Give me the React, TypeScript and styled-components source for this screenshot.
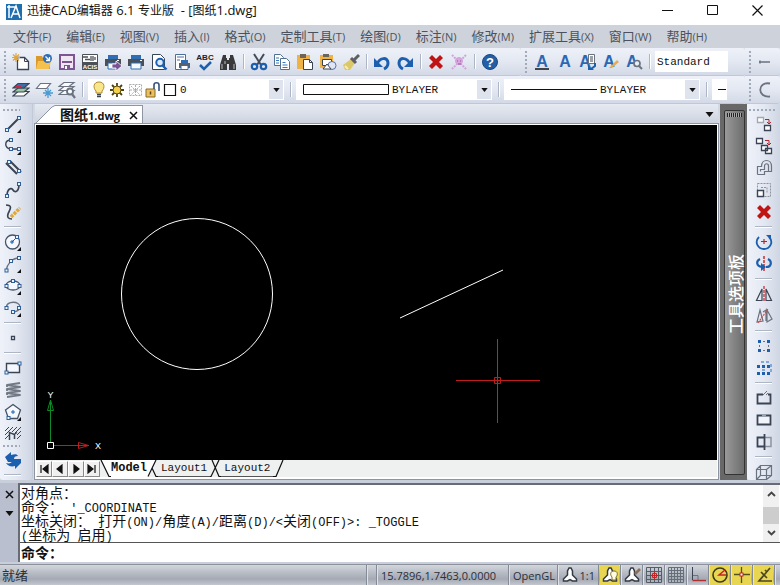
import React, { ReactNode } from "react";
import styled, { createGlobalStyle, css } from "styled-components";

const ui = `"Open Sans", "Noto Sans CJK SC", sans-serif`;
const mono = `"Liberation Mono", "Noto Sans CJK SC", monospace`;

const GlobalStyle = createGlobalStyle`
  * { box-sizing: border-box; }
  body { margin: 0; font-family: ${ui}; font-size: 12px; color: #111; overflow: hidden; }
  button, input, select { font: inherit; color: inherit; margin: 0; padding: 0; border: 0; background: none; border-radius: 0; }
  svg { display: block; flex: none; }
`;

/* ---------- icon drawings, all on an 18 x 18 grid ---------- */

const D = "#3b4454";
const B = "#1c5fae";
const G = "#6b7280";

const Node = ({ x, y }: { x: number; y: number }) => (
  <rect x={x - 1.5} y={y - 1.5} width="3" height="3" fill="#eef4fc" stroke="#2f5f96" />
);
const More = () => <path d="M17 14v4h-4z" fill="#111" />;
const Letter = ({ x = 9 }: { x?: number }) => (
  <text x={x} y="14" textAnchor="middle" fontFamily="Liberation Sans" fontWeight="700" fontSize="16" fill="#2a68b4">A</text>
);
const Printer = () => (
  <g>
    <path d="M4 2h10v5H4z" fill="#2f6db5" />
    <path d="M1 6h16v7H1z" fill="#4a5058" />
    <path d="M4 10h10v6H4z" fill="#f5f8fc" stroke="#2f6db5" />
    <path d="M13 7.500h2" stroke="#fff" />
  </g>
);
const Compass = () => (
  <path d="M8 2h2l1.500 3v4l4 4v2h-4L9 13.500 6.500 15h-4v-2l4-4V5z" fill="#fff" stroke="#333a44" strokeWidth="1.500" />
);

const drawings: Record<string, ReactNode> = {
  new: (
    <g>
      <path d="M5.500 4.500h7l4 4v8h-11z" fill="#fff" stroke={D} strokeWidth="1.300" />
      <path d="M12.500 4.500v4h4" fill="none" stroke={D} />
      <path d="M4 0v9M0 4.500h8M1 1.500l6 6M7 1.500l-6 6" stroke="#e0a63a" strokeWidth="1.200" />
    </g>
  ),
  open: (
    <g>
      <path d="M1 3h6l1 2h7v11H1z" fill="#d99a2b" />
      <path d="M3 8h13l-2 8H1z" fill="#f4c04e" />
      <circle cx="12.500" cy="5.500" r="4.500" fill="#2f6db5" />
      <path d="M10.500 3.500l3.500 3.500M14.500 4v3.500H11" fill="none" stroke="#fff" strokeWidth="1.300" />
    </g>
  ),
  save: (
    <g>
      <path d="M2 2h14v14H2z" fill="#efe6f2" stroke="#7d5590" strokeWidth="2" />
      <path d="M4 8h10v2H4z" fill="#7d5590" />
      <path d="M6 12h6v4H6z" fill="#7d5590" />
      <path d="M7 13h2v3H7z" fill="#fff" />
    </g>
  ),
  acis: (
    <g>
      <path d="M1.500 1.500h15v15h-15z" fill="#fff" stroke="#4c5158" />
      <path d="M2 4h5M4 6.500h5M10 3v5M12 3v5M14 4v3" stroke="#4c5158" strokeWidth="1.300" />
      <path d="M1 9h16v8H1z" fill="#4c5158" />
      <text x="9" y="15.500" textAnchor="middle" fontFamily="Liberation Sans" fontWeight="700" fontSize="6" fill="#fff">ACIS</text>
    </g>
  ),
  publish: (
    <g>
      <Printer />
      <path d="M8 11h4V8l6 5-6 5v-3H8z" fill="#7a5296" stroke="#fff" strokeWidth=".8" />
    </g>
  ),
  print: <Printer />,
  preview: (
    <g>
      <path d="M2.500 1.500h8l4 4v11h-12z" fill="#fff" stroke={D} />
      <circle cx="10" cy="9.500" r="3.700" fill="#dcebfb" stroke={B} strokeWidth="2" />
      <path d="M12.500 12.500l4 4" stroke={B} strokeWidth="2.400" />
    </g>
  ),
  pagesetup: (
    <g>
      <path d="M2.500 1.500h10v15h-10z" fill="#fff" stroke="#4c6f9a" />
      <path d="M4 4h7M4 7h3" stroke="#4c6f9a" />
      <path d="M8 7h7v3H8z" fill="#2f6db5" />
      <path d="M6 10h11v5H6z" fill="#59616c" />
      <path d="M8 12.500h7v4H8z" fill="#fff" stroke="#2f6db5" />
    </g>
  ),
  spell: (
    <g>
      <text x="9" y="7" textAnchor="middle" fontFamily="Liberation Sans" fontWeight="700" fontSize="8" fill="#222">ABC</text>
      <path d="M4 12l4 4 7-7" fill="none" stroke={B} strokeWidth="2.500" />
    </g>
  ),
  find: (
    <g fill="#3a3a3a">
      <path d="M4 2h3v3h1v12H1v-5zM14 2h-3v3h-1v12h7v-5z" />
      <path d="M7 7h4v4H7z" />
      <path d="M3 11v5M6 8v3M15 11v5" stroke="#b8bcc4" />
    </g>
  ),
  cut: (
    <g fill="none">
      <path d="M4 1l7 11M14 1L7 12" stroke="#444c58" strokeWidth="2" />
      <circle cx="4.500" cy="13.500" r="2.700" stroke={B} strokeWidth="2.200" />
      <circle cx="13.500" cy="13.500" r="2.700" stroke={B} strokeWidth="2.200" />
    </g>
  ),
  copy: (
    <g fill="#fff" stroke="#53708f">
      <path d="M1.500 1.500h6l3 3v8h-9z" />
      <path d="M7.500 5.500h6l3 3v8h-9z" />
      <path d="M3 5h3M3 7.500h3M3 10h3M9.500 9.500h3M9.500 12h5M9.500 14.500h5" stroke="#3575bd" />
    </g>
  ),
  paste: (
    <g>
      <path d="M1 2h13v14H1z" fill="#eeb246" />
      <path d="M4 1h6v4H4z" fill="#6b6558" />
      <path d="M7.500 6.500h6l3 3v7h-9z" fill="#fff" stroke={D} />
      <path d="M13.500 6.500v3h3" fill="none" stroke={D} />
    </g>
  ),
  pasteblock: (
    <g>
      <path d="M1 2h13v13H1z" fill="#eeb246" />
      <path d="M4 1h6v3H4z" fill="#6b6558" />
      <path d="M3.500 6.500h9v6h-9z" fill="#fff" stroke={D} />
      <circle cx="13" cy="12.500" r="4" fill="#dfe7f6" stroke="#5d6da0" />
      <path d="M4 16l4-5 4 5z" fill="#fff" stroke={D} />
    </g>
  ),
  brush: (
    <g>
      <path d="M9 6l4 4-5 7H3L1 12z" fill="#dcc868" />
      <path d="M9 5l5 5M12 7l5-5" stroke="#5e5f63" strokeWidth="3" />
      <path d="M3 13l3 3" stroke="#f5ecba" strokeWidth="2" />
    </g>
  ),
  undo: (
    <g>
      <path d="M4 11c3-7 11-7 11-1 0 3-2 5-4 6" fill="none" stroke={B} strokeWidth="3" />
      <path d="M1 5v9h9z" fill={B} />
    </g>
  ),
  redo: (
    <g>
      <path d="M14 11C11 4 3 4 3 10c0 3 2 5 4 6" fill="none" stroke={B} strokeWidth="3" />
      <path d="M17 5v9H8z" fill={B} />
    </g>
  ),
  erase: <path d="M2 5l3-3 4 4 4-4 3 3-4 4 4 4-3 3-4-4-4 4-3-3 4-4z" fill="#c01313" />,
  purge: (
    <g fill="none" stroke="#d3a2dc">
      <path d="M2 2l14 14M16 2L2 16" strokeWidth="2" strokeDasharray="2 1" />
      <circle cx="9" cy="8" r="3.500" fill="#d9a5de" />
      <path d="M7 8h1M10 8h1M8 11h3" stroke="#8b5a98" />
    </g>
  ),
  help: (
    <g>
      <circle cx="9" cy="9" r="7.500" fill="#245fa5" stroke="#194a86" />
      <text x="9" y="13.500" textAnchor="middle" fontFamily="Liberation Sans" fontWeight="700" fontSize="13" fill="#fff">?</text>
    </g>
  ),
  text: (<g><Letter /><path d="M2 16h14" stroke="#111" strokeWidth="1.300" /></g>),
  mtext: <Letter />,
  textedit: (
    <g>
      <Letter x={6} />
      <path d="M9.500 1.500h6v9h-6z" fill="#fff" stroke={G} />
      <path d="M11 4h3M11 6h3M11 8h3" stroke={D} />
      <path d="M16 10v3l-4 3" fill="none" stroke={B} strokeWidth="2" />
      <path d="M9 12v5h6z" fill={B} />
    </g>
  ),
  textstyle: (
    <g>
      <Letter x={7} />
      <path d="M7 15l8-8 2 2-7 6z" fill="#e5ad50" />
    </g>
  ),
  textfind: (
    <g>
      <Letter x={7} />
      <circle cx="12" cy="10.500" r="3" fill="#e8f0f6" stroke={G} strokeWidth="1.700" />
      <path d="M14 13l3 3" stroke={G} strokeWidth="2" />
    </g>
  ),
  dim: <path d="M2 9h11M3 7.500v3" stroke={G} strokeWidth="1.500" />,
  arcend: <path d="M13 2.500C0 0 0 17 13 15.500" fill="none" stroke={G} strokeWidth="1.800" />,
  layers: (
    <g strokeWidth="1.200" stroke={D}>
      <path d="M6 10.500h11l-5 4.500H1z" fill="#fff" />
      <path d="M6 7h11l-5 4H1z" fill="#9bc6a6" />
      <path d="M6 2.500h11L12 7H1z" fill="#3e6ea8" />
      <path d="M4 6h5" stroke="#c4284a" strokeWidth="2" />
    </g>
  ),
  freeze: (
    <g fill="none">
      <path d="M5.500 2.500h10l-4 5h-10z" fill="#fff" stroke={G} strokeWidth="1.200" />
      <path d="M13 7v10M8 12h10M10 9l6 6M16 9l-6 6" stroke="#4a9ad2" strokeWidth="1.300" />
    </g>
  ),
  layerfind: (
    <g strokeWidth="1.200" fill="#f8fafc" stroke={G}>
      <path d="M6 9.500h10l-5 4H1z" />
      <path d="M6 5.500h10l-5 4H1z" />
      <path d="M6 1.500h10l-5 4H1z" />
      <circle cx="12" cy="10.500" r="3" strokeWidth="1.800" />
      <path d="M14 13l3 4" strokeWidth="2.200" />
    </g>
  ),
  bulb: (
    <g>
      <path d="M9 1c-6 0-6 6-3 9v2h6v-2c3-3 3-9-3-9z" fill="#f9e58a" stroke="#b08c32" />
      <path d="M7 13.500h4M7 15.500h4" stroke={D} strokeWidth="1.500" />
    </g>
  ),
  sun: (
    <g>
      <path d="M9 2v14M2 9h14M4 4l10 10M14 4L4 14" stroke="#4e430f" strokeWidth="1.800" />
      <circle cx="9" cy="9" r="4" fill="#f6cf4c" stroke="#5d4d16" />
    </g>
  ),
  frozen: (
    <g stroke="#a9acb0" fill="none" strokeDasharray="2 1">
      <path d="M3.500 3.500h12v11h-12z" />
      <path d="M9.500 4v10M4 9h11M5 5l9 9M14 5l-9 9" />
    </g>
  ),
  lock: (
    <g>
      <path d="M2 8h9v8H2z" fill="#ecc05e" stroke="#8a6a24" />
      <path d="M10 8V4c0-3 5-3 5 0v6" fill="none" stroke="#35507c" strokeWidth="1.600" />
      <path d="M6.500 10.500v3" stroke="#5a4414" strokeWidth="1.500" />
    </g>
  ),
  swatch: <path d="M2.500 3.500h11v11h-11z" fill="#fff" stroke="#111" strokeWidth="1.200" />,
  line: (<g><path d="M3 15L15 3" stroke={D} strokeWidth="2" /><Node x={3} y={15} /><Node x={15} y={3} /><More /></g>),
  polyline: (
    <g>
      <path d="M7 3C0 3 0 11 7 12h8" fill="none" stroke={D} strokeWidth="1.400" />
      <Node x={7} y={3} /><Node x={7} y={12} /><Node x={15} y={12} /><More />
    </g>
  ),
  mline: (
    <g stroke={D} strokeWidth="2">
      <path d="M2 4l11 11M6 2l11 11" />
      <g strokeWidth="1"><Node x={5} y={3} /><Node x={15} y={12} /></g>
    </g>
  ),
  spline: (
    <g>
      <path d="M3 15C3 8 7 6 9 9s6 2 6-6" fill="none" stroke={D} strokeWidth="1.700" />
      <Node x={3} y={15} /><Node x={15} y={3} />
    </g>
  ),
  sketch: (
    <g fill="none">
      <path d="M2 2c8 0 3 6 2 9s0 5 4 5" stroke={D} strokeWidth="1.700" />
      <path d="M7 14l9-9" stroke="#e0a838" strokeWidth="3.600" strokeDasharray="3 1" />
    </g>
  ),
  circle: (
    <g>
      <circle cx="8.500" cy="9" r="7" fill="#f5f9ff" stroke="#46546a" strokeWidth="1.300" />
      <path d="M8 9l5-5M6 9h4M8 7v4" stroke={B} /><Node x={13} y={4} /><More />
    </g>
  ),
  arc: (
    <g>
      <path d="M2 16C3 9 8 3 15 3" fill="none" stroke={G} strokeWidth="1.400" />
      <Node x={2.500} y={15.500} /><Node x={7} y={6} /><Node x={15} y={3} /><More />
    </g>
  ),
  ellipse: (
    <g>
      <ellipse cx="9" cy="8.500" rx="7" ry="4.500" fill="#f5f9ff" stroke="#46546a" strokeWidth="1.300" />
      <Node x={2.500} y={9} /><Node x={15.500} y={9} /><Node x={9} y={4} /><More />
    </g>
  ),
  earc: (
    <g>
      <path d="M2 9C3 1 16 2 16 8c0 2-2 4-6 5" fill="none" stroke={G} strokeWidth="1.300" />
      <Node x={2.500} y={9} /><Node x={15} y={9} /><Node x={9} y={13} /><More />
    </g>
  ),
  point: <path d="M7.500 7.500h3v3h-3z" fill="#fff" stroke={D} strokeWidth="1.300" />,
  rect: (
    <g>
      <path d="M2.500 4.500h13v9h-13z" fill="#f5f9ff" stroke={D} strokeWidth="1.400" />
      <Node x={2.500} y={13.500} /><Node x={15.500} y={4.500} />
    </g>
  ),
  spiral: (
    <g fill="none" stroke="#727984" strokeWidth="1.800">
      <path d="M16 2L3 4l13 2L3 8l13 2L3 12l13 2-13 2" strokeLinejoin="round" />
      <path d="M3 4v2M3 8v2M3 12v2" />
    </g>
  ),
  polygon: (
    <g>
      <path d="M9 1.500l7.500 5.500-3 8.500h-9L1.500 7z" fill="#f5f9ff" stroke="#46546a" strokeWidth="1.300" />
      <path d="M7 9h4M9 7v4" stroke={B} /><Node x={4.500} y={15} /><More />
    </g>
  ),
  hatch: (
    <g fill="none" stroke={D}>
      <path d="M1 6l4-4M1 10l8-8M1 14l4-4M8 7l5-5M11 8l6-6M13 10l4-4M13 14l4-4" />
      <path d="M5.500 15V7.500l5 2V14M10 9.500l3-2" strokeWidth="1.500" />
    </g>
  ),
  refresh: (
    <g fill={B}>
      <path d="M1 6l6-5v3c4-1 6-1 7 1-3 0-4 1-4 3l3 3H4z" />
      <path d="M17 12l-6 6v-3c-4 1-7 0-9-3 3 1 6 0 6-2L6 8h11z" />
    </g>
  ),
  move: (
    <g fill="#fff">
      <path d="M2.500 2.500h6v5h-6z" stroke="#a3a7b2" strokeWidth="1.300" />
      <path d="M9.500 10.500h6v5h-6z" stroke={D} strokeWidth="1.300" />
      <path d="M10 4.500h4v4M12 7l2 2 2-2" fill="none" stroke="#b3242a" />
    </g>
  ),
  copyobj: (
    <g fill="#fff" stroke={D} strokeWidth="1.300">
      <path d="M1.500 1.500h6v5h-6zM6.500 8.500h6v5h-6zM10.500 11.500h6v5h-6z" />
      <path d="M10 3.500h4v4M12 6l2 2 2-2" fill="none" stroke="#b3242a" strokeWidth="1" />
    </g>
  ),
  offset: (
    <g fill="none" stroke={G} strokeWidth="1.200">
      <path d="M2.500 15.500v-8h4c0-8 10-8 10 0v5h-3" />
      <path d="M5.500 12.500v-2h4V7c0-3 4-3 4 0v5.500h-4v3h-7" />
    </g>
  ),
  scale: (
    <g fill="none">
      <path d="M2.500 2.500h13v13h-13zM6 6.500h6v6" stroke="#8e949f" strokeDasharray="2 1" />
      <path d="M2.500 9.500h6v6h-6z" fill="#fff" stroke={D} strokeWidth="1.400" />
    </g>
  ),
  rotate: (
    <g fill="none">
      <path d="M4 4C-1 9 3 16 9 16s10-7 5-12" stroke={B} strokeWidth="1.800" />
      <path d="M11 2h5v5z" fill={B} /><path d="M6 8.500h6M9 6v5" stroke="#c02222" strokeWidth="1.200" />
    </g>
  ),
  rotate3d: (
    <g fill="none">
      <path d="M9 1v16" stroke="#c02222" strokeWidth="1.400" strokeDasharray="3 1" />
      <path d="M5 4C1 6 1 11 7 12M13 4c4 2 4 8-2 8" stroke={B} strokeWidth="2.200" />
      <path d="M6 8v8l5-4z" fill={B} />
    </g>
  ),
  mirror: (
    <g fill="none" stroke={D} strokeWidth="1.200">
      <path d="M7 4v11.500H1.500zM11 4v11.500h5.500z" />
      <path d="M9 1v16" stroke="#c02222" strokeDasharray="3 1" />
    </g>
  ),
  mirror3d: (
    <g fill="none" stroke={G} strokeWidth="1.200">
      <path d="M5 3l3 11-6 1zM12 3l5 9-5 3zM8 5l3-2v11" />
      <path d="M3 16L13 2" stroke="#c9504c" strokeDasharray="2 1" />
    </g>
  ),
  array: (
    <g fill={B}>
      <path d="M3 3h3v3H3zM12 3h3v3h-3zM3 12h3v3H3zM12 12h3v3h-3z" />
      <path d="M8 4h2v1H8zM8 13h2v1H8zM4 8h1v2H4zM13 8h1v2h-1z" fill={G} />
    </g>
  ),
  array3d: (
    <g fill={B}>
      <path d="M2 6h3v3H2zM7 6h3v3H7zM12 6h3v3h-3zM2 13h3v3H2zM7 13h3v3H7zM12 13h3v3h-3z" />
      <path d="M6 2h3v2H6zM11 2h3v2h-3zM15 5h2v3h-2zM15 10h2v3h-2zM7 10h3v2H7z" fill="#83aad6" />
    </g>
  ),
  breakpt: (
    <g fill="none">
      <path d="M8 5.500H2.500v9h13v-9H13" stroke={D} strokeWidth="1.800" />
      <path d="M8 6l4-4M11 6l2-2" stroke={G} />
    </g>
  ),
  breakobj: (
    <g fill="#f1f5fb">
      <path d="M2.500 4.500h13v9h-13z" stroke={D} strokeWidth="1.800" />
      <path d="M7 4.500h4" stroke="#9ca6b6" strokeWidth="1.800" />
    </g>
  ),
  trim: (
    <g fill="none">
      <path d="M10 4.500h6v9h-6" stroke="#8e949f" strokeWidth="1.500" />
      <path d="M9 4.500H2.500v9H9M9.500 1v16" stroke={D} strokeWidth="1.800" />
    </g>
  ),
  box3d: <path d="M1.500 6.500h10v10h-10zM1.500 6.500l4-4h11v10l-5 4M11.500 6.500l5-4M5.500 2.500v10h11M1.500 16.500l4-4" fill="none" stroke={G} strokeWidth="1.200" />,
  compass: <Compass />,
  annovis: (<g><Compass /><path d="M13 5c-4 0-4 4-2 6v3h4v-3c2-2 2-6-2-6z" fill="#fffbe0" stroke="#7b6f20" /></g>),
  annoadd: (<g><Compass /><path d="M12 8l5-5" stroke="#8b6f5a" strokeWidth="2.600" /></g>),
  snap: (
    <g fill="none">
      <path d="M1.500 1.500h15v15h-15zM5.500 1v16M9.500 1v16M13.500 1v16M1 5.500h16M1 9.500h16M1 13.500h16" stroke="#555d69" />
      <path d="M9.500 5v9M5 9.500h9M7.500 7.500h4v4h-4z" stroke="#c42424" />
    </g>
  ),
  grid: <path d="M1.500 1.500h15v15h-15zM4.500 1v16M7.500 1v16M10.500 1v16M13.500 1v16M1 4.500h16M1 7.500h16M1 10.500h16M1 13.500h16" fill="none" stroke="#666e7a" />,
  ortho: (<g fill="none"><path d="M3.500 14.500H17" stroke="#b62c2c" strokeWidth="1.400" /><path d="M3.500 1v13" stroke={D} /><path d="M4 9.500h5v5" stroke={G} /></g>),
  polar: (
    <g fill="none">
      <circle cx="9" cy="9" r="7" stroke="#3d3a1c" strokeWidth="1.600" />
      <path d="M15 9H8l6-5" stroke="#c42424" strokeWidth="1.500" />
    </g>
  ),
  osnap: (<g fill="none"><path d="M8.500 1v16M1 8.500h16" stroke="#55501f" strokeWidth="1.300" /><rect x="7" y="7" width="3" height="3" fill="#fff" stroke="#c42424" /></g>),
  otrack: <path d="M15 2L4 15h13M6 6l6 6M10 4l2 2" fill="none" stroke="#4b4720" strokeWidth="1.700" />,
};

const Icon = ({ name }: { name: string }) => (
  <svg width="18" height="18" viewBox="0 0 18 18" aria-hidden="true">{drawings[name]}</svg>
);

/* ---------- frame ---------- */

const Window = styled.div`
  display: flex;
  flex-direction: column;
  height: 100vh;
  background: #d3d8e3;
`;

const TitleBar = styled.header`
  display: flex;
  align-items: center;
  height: 25px;
  padding-left: 6px;
  background: #fff;
`;

const Title = styled.h1`
  flex: 1;
  margin: 0;
  padding: 0 0 4px 5px;
  font-size: 12px;
  line-height: 18px;
  font-weight: 400;
  white-space: pre;
`;

const TitleLatin = styled.span`
  font-size: 13px;
`;

const WindowButton = styled.button`
  display: grid;
  place-items: center;
  width: 45px;
  height: 20px;
  margin-bottom: 5px;
`;

const MenuBar = styled.nav`
  display: flex;
  align-items: center;
  height: 23px;
  padding: 0 13px;
  gap: 15px;
  background: #ced2da;
  color: #4b525e;
`;

const MenuButton = styled.button`
  font-size: 13px;
  line-height: 20px;
  white-space: nowrap;
`;

const Key = styled.span`
  font-size: 11px;
`;

const ToolRow = styled.div`
  display: flex;
  height: 28px;
  overflow: hidden;
  background: #d9deea;
`;

const Toolbar = styled.div<{ $width?: number }>`
  display: flex;
  align-items: center;
  flex: ${(p) => (p.$width ? `0 0 ${p.$width}px` : "1 0 0")};
  padding-left: 4px;
  overflow: hidden;
  border-bottom: 1px solid #c0c7d5;
  border-radius: 0 3px 3px 0;
  background: linear-gradient(#eef1f8, #e3e8f2 50%, #d3d9e6);
`;

const Grip = styled.span<{ $across?: boolean }>`
  flex: none;
  ${(p) =>
    p.$across
      ? css`
          align-self: stretch;
          height: 2px;
          margin: 0 4px 2px 2px;
          background: repeating-linear-gradient(90deg, #a2a9b8 0 2px, transparent 2px 4px);
        `
      : css`
          width: 2px;
          height: 22px;
          margin-right: 3px;
          background: repeating-linear-gradient(#a2a9b8 0 2px, transparent 2px 4px);
        `}
`;

const Tool = styled.button`
  display: grid;
  place-items: center;
  flex: none;
  width: 23px;
  height: 22px;
`;

const Divider = styled.span<{ $across?: boolean }>`
  flex: none;
  background: #aeb5c4;
  ${(p) =>
    p.$across
      ? css`
          width: 17px;
          height: 1px;
          margin: 3px 0 4px;
          box-shadow: 0 1px #fff;
        `
      : css`
          width: 1px;
          height: 15px;
          margin: 0 3px 0 4px;
          box-shadow: 1px 0 #fff;
        `}
`;

const Combo = styled.div<{ $width: number }>`
  display: flex;
  align-items: center;
  flex: none;
  width: ${(p) => p.$width}px;
  height: 21px;
  margin: 0 2px;
  padding: 0 1px 0 2px;
  background: #fff;
`;

const Select = styled.select`
  appearance: none;
  flex: 1;
  min-width: 0;
  font-family: ${mono};
  font-size: 11px;
  line-height: 16px;
`;

const ComboArrow = styled.span`
  display: grid;
  place-items: center;
  width: 14px;
  height: 19px;
  background: #dfe3ee;
`;

const Triangle = ({ size = 7 }: { size?: number }) => (
  <svg width={size} height={size === 7 ? 4 : 5} viewBox="0 0 8 5" aria-hidden="true">
    <path d="M0 0h8L4 5z" fill="#111" />
  </svg>
);

const LayerIcons = styled.div`
  display: flex;
  width: 90px;
`;

/* ---------- workspace ---------- */

const Workspace = styled.main`
  display: flex;
  flex: 1;
  min-height: 0;
`;

const SideBar = styled.div<{ $right?: boolean }>`
  display: flex;
  flex-direction: column;
  align-items: ${(p) => (p.$right ? "center" : "flex-start")};
  flex: 0 0 33px;
  padding: 5px 0 0 ${(p) => (p.$right ? 0 : 1)}px;
  overflow: hidden;
  border-radius: 0 0 3px 3px;
  border-right: ${(p) => (p.$right ? 0 : 1)}px solid #c3cad7;
  background: linear-gradient(90deg, #eff2f9, #e3e8f2 50%, #cfd6e3);
`;

const SideTools = styled.div`
  display: flex;
  flex-direction: column;
  align-items: center;
`;

const Document = styled.section`
  display: flex;
  flex-direction: column;
  flex: 1;
  min-width: 0;
  padding: 0 2px 1px;
`;

const DocTabs = styled.div`
  display: flex;
  align-items: center;
  justify-content: space-between;
  height: 20px;
  padding-right: 4px;
  background: linear-gradient(#e6eaf2, #ccd2de);
`;

const DocTab = styled.div`
  display: flex;
  align-self: flex-end;
  height: 19px;
`;

const DocTabBody = styled.div`
  display: flex;
  align-items: center;
  gap: 9px;
  padding: 0 4px 0 5px;
  background: #fff;
  border-top: 1px solid #8d94a2;
  border-right: 1px solid #8d94a2;
`;

const DocTabButton = styled.button`
  font-size: 14px;
  line-height: 16px;
  font-weight: 700;
`;

const Latin = styled.span`
  font-size: 11px;
`;

const Bare = styled.button`
  display: grid;
  place-items: center;
`;

const DrawFrame = styled.div`
  display: flex;
  flex-direction: column;
  flex: 1;
  min-height: 0;
  border: 1px solid #fff;
  border-bottom-width: 2px;
  outline: 1px solid #8d94a2;
  background: #fff;
`;

const DrawArea = styled.div`
  position: relative;
  flex: 1;
  min-height: 0;
  overflow: hidden;
  background: #000;
`;

const Drawing = styled.svg`
  width: 100%;
  height: 100%;
`;

const Ucs = styled.svg`
  position: absolute;
  left: 8px;
  bottom: 8px;
`;

const LayoutTabs = styled.div`
  display: flex;
  align-items: center;
  height: 17px;
  background: #eff0f0;
`;

const NavButton = styled.button`
  display: grid;
  place-items: center;
  width: 16px;
  height: 16px;
  background: #f0f0f0;
  border: 1px solid;
  border-color: #fff #8b8b8b #8b8b8b #fff;
`;

const LayoutTab = styled.button<{ $active?: boolean }>`
  height: 17px;
  padding: 0 ${(p) => (p.$active ? 0 : 3)}px;
  font-family: ${mono};
  font-size: ${(p) => (p.$active ? 12 : 11)}px;
  line-height: 16px;
  font-weight: ${(p) => (p.$active ? 700 : 400)};
  background: ${(p) => (p.$active ? "#fff" : "transparent")};
  border-bottom: 1px solid ${(p) => (p.$active ? "#fff" : "#555")};
`;

const Palette = styled.aside`
  display: flex;
  flex: 0 0 27px;
  padding: 6px 2px 5px 4px;
  background: #686868;
`;

const PaletteBar = styled.div`
  display: flex;
  flex-direction: column;
  align-items: center;
  flex: 1;
  min-width: 0;
  padding: 2px 0;
  border: 1px solid #333;
  border-radius: 2px;
  background: linear-gradient(90deg, #9a9a9a, #858585 45%, #6d6d6d);
`;

const PaletteGrip = styled.span`
  width: 15px;
  height: 4px;
  background: repeating-linear-gradient(90deg, #222 0 1px, #aaa 1px 2px);
`;

const PaletteTitle = styled.h2`
  margin: auto 0;
  writing-mode: vertical-rl;
  text-orientation: sideways;
  transform: rotate(180deg);
  font-family: "Noto Sans CJK SC", sans-serif;
  font-size: 16px;
  line-height: 18px;
  font-weight: 500;
  color: #fff;
`;

/* ---------- command window ---------- */

const Command = styled.section`
  display: flex;
  height: 84px;
  padding: 3px 0 2px;
  background: #c9cedb;
`;

const CommandSide = styled.div`
  display: flex;
  flex-direction: column;
  align-items: center;
  gap: 12px;
  width: 18px;
  padding: 7px 0 0;
  background: #b9bfce;
`;

const CommandBody = styled.div`
  flex: 1;
  min-width: 0;
  border-top: 2px solid #666b75;
  border-left: 2px solid #666b75;
  background: #fff;
`;

const History = styled.div`
  display: flex;
  height: 58px;
  border-bottom: 1px solid #555;
`;

const Log = styled.div`
  flex: 1;
  min-width: 0;
  padding-left: 1px;
  font-family: "Noto Sans CJK SC", sans-serif;
  font-size: 14px;
  line-height: 14px;
`;

const LogLine = styled.div`
  height: 14px;
  white-space: pre;
`;

const Code = styled.span`
  font-family: ${mono};
  font-size: 12px;
`;

const ScrollTrack = styled.div`
  display: flex;
  flex-direction: column;
  justify-content: space-between;
  width: 16px;
  margin-right: 1px;
  background: #f0f0f0;
`;

const ScrollThumb = styled.span`
  height: 17px;
  margin-top: 4px;
  background: #cdcdcd;
`;

const ScrollButton = styled.button`
  display: grid;
  place-items: center;
  height: 18px;
`;

const Prompt = styled.label`
  display: flex;
  align-items: center;
  height: 19px;
  padding-left: 1px;
  font-size: 14px;
  line-height: 18px;
  font-weight: 700;
`;

const PromptInput = styled.input`
  flex: 1;
  outline: 0;
`;

/* ---------- status bar ---------- */

const StatusBar = styled.footer`
  display: flex;
  height: 21px;
  padding-right: 5px;
  border-top: 1px solid #8d929c;
  background: linear-gradient(#d3d6dc, #b3b8c1 45%, #a4a9b3 70%, #c3c7cf);
  color: #2b303a;
  font-size: 11px;
  line-height: 21px;
`;

const StatusCell = styled.div<{ $width?: number }>`
  flex: ${(p) => (p.$width ? `0 0 ${p.$width}px` : "1 0 0")};
  padding-left: ${(p) => (p.$width ? 4 : 2)}px;
  font-size: ${(p) => (p.$width ? 11 : 13)}px;
  border-right: 1px solid #858b96;
  box-shadow: 1px 0 #dfe2e7;
  white-space: nowrap;
`;

const ScaleButton = styled.button`
  display: flex;
  align-items: center;
  justify-content: space-between;
  width: 41px;
  padding: 0 3px;
  border-right: 1px solid #858b96;
`;

const Toggle = styled.button<{ $on?: boolean }>`
  display: grid;
  place-items: center;
  width: 22px;
  border-right: 1px solid #858b96;
  padding: 0 1px;
  background: ${(p) => (p.$on ? "#e8d653" : "transparent")};
  background-clip: content-box;
  box-shadow: 1px 0 #dfe2e7;
`;

/* ---------- data ---------- */

const menus: [string, string][] = [
  ["文件", "F"], ["编辑", "E"], ["视图", "V"], ["插入", "I"], ["格式", "O"], ["定制工具", "T"],
  ["绘图", "D"], ["标注", "N"], ["修改", "M"], ["扩展工具", "X"], ["窗口", "W"], ["帮助", "H"],
];

type Item = [string, string] | "|" | ":";

const standardTools: Item[] = [
  ["new", "新建"], ["open", "打开"], ["save", "保存"], ["acis", "ACIS"], ["publish", "发布"], ["print", "打印"],
  ["preview", "打印预览"], ["pagesetup", "页面设置"], ["spell", "拼写检查"], ["find", "查找"], "|",
  ["cut", "剪切"], ["copy", "复制"], ["paste", "粘贴"], ["pasteblock", "粘贴为块"], ["brush", "特性匹配"], "|",
  ["undo", "撤销"], ["redo", "重做"], "|", ["erase", "删除"], ["purge", "清理"], "|", ["help", "帮助"],
];
const textTools: Item[] = [
  ["text", "单行文字"], ["mtext", "多行文字"], ["textedit", "编辑文字"], ["textstyle", "文字样式"], ["textfind", "查找文字"],
];
const layerTools: Item[] = [["layers", "图层"], ["freeze", "冻结图层"], ["layerfind", "图层浏览"], "|"];
const drawTools: Item[] = [
  ":", ["line", "直线"], ["polyline", "多段线"], ["mline", "多线"], ["spline", "样条曲线"], ["sketch", "徒手画"], "|",
  ["circle", "圆"], ["arc", "圆弧"], ["ellipse", "椭圆"], ["earc", "椭圆弧"], "|", ["point", "点"], "|",
  ["rect", "矩形"], ["spiral", "螺旋"], ["polygon", "多边形"], ["hatch", "填充"], ":", ["refresh", "重生成"], "|",
];
const modifyTools: Item[] = [
  ":", ["move", "移动"], ["copyobj", "复制对象"], ["offset", "偏移"], ["scale", "缩放"], ["erase", "删除"], "|",
  ["rotate", "旋转"], ["rotate3d", "三维旋转"], "|", ["mirror", "镜像"], ["mirror3d", "三维镜像"], "|",
  ["array", "阵列"], ["array3d", "三维阵列"], "|", ["breakpt", "打断于点"], ["breakobj", "打断"], ["trim", "修剪"], "|",
  ["box3d", "长方体"],
];
const toggles: [string, string, boolean][] = [
  ["annovis", "注释可见性", true], ["annoadd", "自动添加比例", false], ["snap", "捕捉", false], ["grid", "栅格", false],
  ["ortho", "正交", false], ["polar", "极轴", true], ["osnap", "对象捕捉", true], ["otrack", "对象追踪", true],
];

const Tools = ({ items, across }: { items: Item[]; across?: boolean }) => (
  <>
    {items.map((item, i) =>
      item === "|" ? <Divider key={i} $across={across} />
        : item === ":" ? <Grip key={i} $across={across} />
          : <Tool key={i} aria-label={item[1]} title={item[1]}><Icon name={item[0]} /></Tool>
    )}
  </>
);

const navPaths = ["M2 1v8M9 1v8L4 5z", "M7 1v8L2 5z", "M3 1v8l5-4z", "M8 1v8M1 1v8l5-4z"];
const navNames = ["第一个布局", "上一个布局", "下一个布局", "最后一个布局"];

const Slash = ({ d, fill }: { d: string; fill?: string }) => (
  <svg width="11" height="17" viewBox="0 0 11 17" aria-hidden="true">
    {fill && <path d={fill} fill="#fff" />}
    <path d={d} fill="none" stroke="#111" strokeWidth="1.200" />
  </svg>
);

const Cross = () => (
  <svg width="9" height="9" viewBox="0 0 9 9" aria-hidden="true">
    <path d="M1 1l7 7M8 1L1 8" stroke="#111" strokeWidth="1.500" />
  </svg>
);

export default function App() {
  return (
    <Window>
      <GlobalStyle />
      <TitleBar>
        <svg width="16" height="18" viewBox="0 0 16 18" aria-hidden="true">
          <path d="M0 0h16v16H0z" fill="#1f6eb0" />
          <path d="M1 3h8M3 1v13M5 14L10 2l4 12M7 10h6" fill="none" stroke="#fff" strokeWidth="1.500" />
        </svg>
        <Title>
          迅捷<TitleLatin>CAD</TitleLatin>编辑器<TitleLatin> 6.1 </TitleLatin>专业版<TitleLatin>{"  - ["}</TitleLatin>图纸<TitleLatin>1.dwg]</TitleLatin>
        </Title>
        <WindowButton aria-label="最小化">
          <svg width="11" height="11"><path d="M0 5.500h11" stroke="#111" /></svg>
        </WindowButton>
        <WindowButton aria-label="最大化">
          <svg width="11" height="11"><path d="M.5.5h10v9h-10z" fill="none" stroke="#111" /></svg>
        </WindowButton>
        <WindowButton aria-label="关闭">
          <svg width="11" height="11"><path d="M.5.5l10 10M10.500.5l-10 10" stroke="#111" strokeWidth="1.200" /></svg>
        </WindowButton>
      </TitleBar>

      <MenuBar>
        {menus.map(([name, key]) => (
          <MenuButton key={key}>{name}<Key>({key})</Key></MenuButton>
        ))}
      </MenuBar>

      <ToolRow>
        <Toolbar $width={521}><Grip /><Tools items={standardTools} /></Toolbar>
        <Toolbar>
          <Grip />
          <Tools items={textTools} />
          <Divider />
          <Combo $width={73}>
            <Select aria-label="文字样式"><option>Standard</option></Select>
          </Combo>
        </Toolbar>
        <Toolbar $width={35}><Grip /><Tools items={[["dim", "标注"]]} /></Toolbar>
      </ToolRow>

      <ToolRow>
        <Toolbar>
          <Grip />
          <Tools items={layerTools} />
          <Combo $width={196}>
            <LayerIcons>
              {["bulb", "sun", "frozen", "lock", "swatch"].map((n) => <Icon key={n} name={n} />)}
            </LayerIcons>
            <Select aria-label="图层"><option>0</option></Select>
            <ComboArrow><Triangle /></ComboArrow>
          </Combo>
          <Divider />
          <Combo $width={196}>
            <svg width="94" height="13" aria-hidden="true"><path d="M5.500 1.500h85v10h-85z" fill="#fff" stroke="#111" /></svg>
            <Select aria-label="颜色"><option>BYLAYER</option></Select>
            <ComboArrow><Triangle /></ComboArrow>
          </Combo>
          <Divider />
          <Combo $width={196}>
            <svg width="94" height="13" aria-hidden="true"><path d="M5 6.500h86" stroke="#111" /></svg>
            <Select aria-label="线型"><option>BYLAYER</option></Select>
            <ComboArrow><Triangle /></ComboArrow>
          </Combo>
          <Divider />
          <Combo $width={15}>
            <svg width="12" height="13" aria-hidden="true"><path d="M4 6.500h8" stroke="#111" /></svg>
          </Combo>
        </Toolbar>
        <Toolbar $width={35}><Grip /><Tools items={[["arcend", "圆弧"]]} /></Toolbar>
      </ToolRow>

      <Workspace>
        <SideBar><SideTools><Tools items={drawTools} across /></SideTools></SideBar>

        <Document>
          <DocTabs>
            <DocTab>
              <svg width="20" height="19" viewBox="0 0 20 19" aria-hidden="true">
                <path d="M0 19L17 2l3-1.500V19z" fill="#fff" />
                <path d="M0 19L17 2l3-1.500" fill="none" stroke="#8d94a2" />
              </svg>
              <DocTabBody>
                <DocTabButton>图纸<Latin>1.dwg</Latin></DocTabButton>
                <Bare aria-label="关闭图纸"><Cross /></Bare>
              </DocTabBody>
            </DocTab>
            <Bare aria-label="图纸列表"><Triangle size={9} /></Bare>
          </DocTabs>
          <DrawFrame>
            <DrawArea>
              <Drawing aria-label="绘图区">
                <circle cx="161" cy="169" r="75.500" fill="none" stroke="#fff" />
                <path d="M364 193l103-48" stroke="#fff" />
                <path d="M461.500 214v84" stroke="#12801c" />
                <path d="M420 255.500h84M458.500 252.500h6v6h-6z" fill="none" stroke="#c01c1c" />
              </Drawing>
              <Ucs width="62" height="62" viewBox="0 0 62 62" aria-hidden="true">
                <path d="M6.500 52V10M3.500 20.500h6L6.500 10z" fill="none" stroke="#0e8a26" />
                <path d="M10 55.500h35M34.500 52.500v6l10-3z" fill="none" stroke="#c01c1c" />
                <path d="M3.500 52.500h6v6h-6z" fill="#000" stroke="#fff" />
                <text x="6.500" y="8" textAnchor="middle" fill="#fff" fontFamily="Liberation Sans" fontSize="9">Y</text>
                <text x="54" y="59" textAnchor="middle" fill="#fff" fontFamily="Liberation Sans" fontSize="9">X</text>
              </Ucs>
            </DrawArea>
            <LayoutTabs>
              {navPaths.map((d, i) => (
                <NavButton key={d} aria-label={navNames[i]}>
                  <svg width="10" height="10"><path d={d} fill="#111" stroke="#111" strokeWidth="1.200" /></svg>
                </NavButton>
              ))}
              <Slash d="M1 0l8 16.500h2" fill="M1 0l8 17h2V0z" />
              <LayoutTab $active>Model</LayoutTab>
              <Slash d="M9 0L1 16.500M5 8l4 8.500h2" fill="M0 0h9L1 17H0z" />
              <LayoutTab>Layout1</LayoutTab>
              <Slash d="M0 16.500h1L9 0M2 0l7 16.500h2" />
              <LayoutTab>Layout2</LayoutTab>
              <Slash d="M0 16.500h3L10 0" />
            </LayoutTabs>
          </DrawFrame>
        </Document>

        <Palette>
          <PaletteBar>
            <PaletteGrip />
            <PaletteTitle>工具选项板</PaletteTitle>
          </PaletteBar>
        </Palette>

        <SideBar $right><Tools items={modifyTools} across /></SideBar>
      </Workspace>

      <Command>
        <CommandSide>
          <Bare aria-label="关闭命令窗口"><Cross /></Bare>
          <Bare aria-label="命令窗口选项"><Triangle size={9} /></Bare>
        </CommandSide>
        <CommandBody>
          <History>
            <Log role="log">
              <LogLine>对角点：</LogLine>
              <LogLine>命令：<Code> '_COORDINATE</Code></LogLine>
              <LogLine>
                坐标关闭：<Code> </Code>打开<Code>(ON)/</Code>角度<Code>(A)/</Code>距离<Code>(D)/&lt;</Code>关闭<Code>(OFF)&gt;: _TOGGLE</Code>
              </LogLine>
              <LogLine><Code>(</Code>坐标为<Code> </Code>启用<Code>)</Code></LogLine>
            </Log>
            <ScrollTrack>
              <ScrollButton aria-label="向上滚动">
                <svg width="9" height="6"><path d="M1 5l3.500-3.500L8 5" fill="none" stroke="#444" strokeWidth="1.800" /></svg>
              </ScrollButton>
              <ScrollThumb />
              <ScrollButton aria-label="向下滚动">
                <svg width="9" height="6"><path d="M1 1l3.500 3.500L8 1" fill="none" stroke="#444" strokeWidth="1.800" /></svg>
              </ScrollButton>
            </ScrollTrack>
          </History>
          <Prompt>命令：<PromptInput type="text" /></Prompt>
        </CommandBody>
      </Command>

      <StatusBar>
        <StatusCell>就绪</StatusCell>
        <StatusCell $width={10} />
        <StatusCell $width={132}>15.7896,1.7463,0.0000</StatusCell>
        <StatusCell $width={49}>OpenGL</StatusCell>
        <ScaleButton><Icon name="compass" />1:1</ScaleButton>
        {toggles.map(([icon, label, on]) => (
          <Toggle key={icon} $on={on} aria-label={label} aria-pressed={on}><Icon name={icon} /></Toggle>
        ))}
      </StatusBar>
    </Window>
  );
}
